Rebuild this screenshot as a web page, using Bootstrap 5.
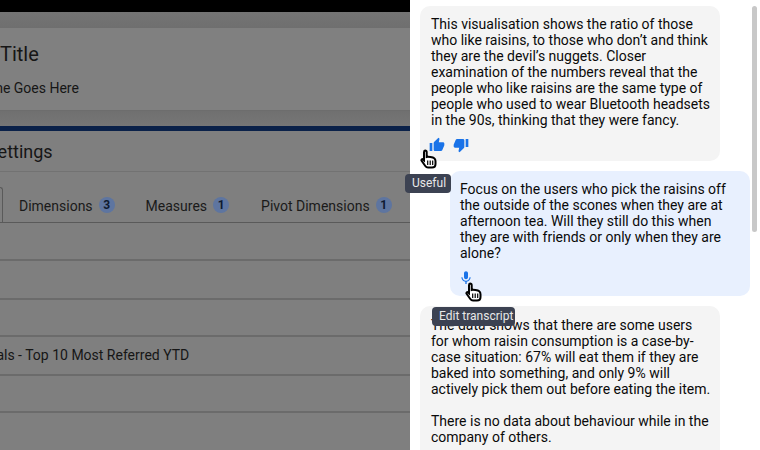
<!doctype html>
<html lang="en"><head><meta charset="utf-8"><title>Chat</title>
<link rel="stylesheet" href="https://cdn.jsdelivr.net/npm/bootstrap@5.3.0/dist/css/bootstrap.min.css">
<style>
html,body{margin:0;height:450px;overflow:hidden;background:#fff}
body{font-family:Roboto,"Liberation Sans",sans-serif;color:#111}
.stage{width:760px;height:450px;position:relative;overflow:hidden}
.leftpane{width:410px;height:450px;overflow:hidden;background:#7f7f7f;color:#161616}
.topbar{height:12px;background:#000}
.band1{height:16px;background:linear-gradient(#747474,#6f6f6f)}
.titlecard{height:83px;background:#808080;border-bottom:1px solid #6d6d6d;padding:12px 0 0 0;white-space:nowrap}
.ttl{font-size:20px;line-height:28px;margin:0;font-weight:400;white-space:nowrap}
.subt{font-size:14px;line-height:20px;margin:10px 0 0;white-space:nowrap}
.hide1{margin-left:-64px}
.hide2{margin-left:-72px}
.hide3{margin-left:-71px}
.band2{height:15px;background:linear-gradient(#707070,#767676)}
.navyline{height:5px;background:#0a2149}
.sethead{height:41px;border-bottom:1px solid #727272;padding:7px 0 0 0}
.sethead .ttl{font-size:18px;line-height:28px}
.tabrow{height:51px;border-bottom:1px solid #5a5a5a;white-space:nowrap}
.tabon{width:3px;height:35px;margin-top:15px;border:1px solid #5a5a5a;border-left:0;border-bottom:0;border-radius:0 4px 0 0;background:#7f7f7f;flex:none}
.tabitem{font-size:14px;line-height:20px;height:20px;color:#1a1a1a;margin-top:24px;flex:none}
.tabone{margin-left:16px}
.tabtwo{margin-left:31px}
.tabthree{margin-left:32px}
.cnt{width:16px;height:16px;border-radius:50%;background:#5e75a0;font-size:12px;font-weight:700;line-height:16px;text-align:center;color:#0e1a30;margin:1px 0 0 6px;flex:none}
.drow{border-bottom:2px solid #6b6b6b;font-size:14px;line-height:20px;white-space:nowrap}
.h1r{height:38px}.h2r{height:39px}.h3r{height:37px}.h4r{height:39px;padding-top:8px;margin-left:0}.h5r{height:37px}
.hide4{margin-left:-68px;display:block}
.chatpane{width:350px;height:450px;overflow:hidden;padding:6px 0 0 10px;background:#fff}
.bubble{width:300px;border-radius:10px;font-size:14px;line-height:16px;color:#0a0a0a}
.bot{background:#f4f4f4;padding:10px 8px 8px 11px;height:155px}
.usr{background:#e8f0fe;margin:10px 0 10px 30px;padding:10px 20px 8px 10px;height:125px}
.tail{height:200px;padding-top:11px}
.bubtext{margin:0}
.actions{margin-top:9px;gap:8px;margin-left:-2px}
.ico{width:16px;height:16px;fill:#1a73e8;display:block}
.tip{position:absolute;background:#3c4252;color:#e8e8e8;font-size:12px;line-height:16px;padding:1px 6px 2px 7px;border-radius:4px;white-space:nowrap}
.tip1{left:405px;top:174px;height:19px;width:46px}
.tip2{left:432px;top:307px;height:19px;width:83px}
.hand{position:absolute;width:17px;height:20px}
.hand1{left:420px;top:149px}
.hand2{left:465px;top:282px}
.sbar{position:absolute;left:752px;top:6px;width:5px;height:226px;border-radius:3px;background:#c8c8c8}
</style></head><body>
<div class="stage d-flex">
<div class="leftpane">
  <div class="topbar"></div><div class="band1"></div>
  <div class="titlecard"><h1 class="ttl hide1">Report Title</h1><p class="subt hide2">Report Name Goes Here</p></div>
  <div class="band2"></div><div class="navyline"></div>
  <div class="sethead"><h2 class="ttl hide3">Report Settings</h2></div>
  <div class="tabrow d-flex align-items-start">
    <div class="tabon"></div>
    <div class="tabitem tabone d-flex"><span>Dimensions</span><span class="cnt">3</span></div>
    <div class="tabitem tabtwo d-flex"><span>Measures</span><span class="cnt">1</span></div>
    <div class="tabitem tabthree d-flex"><span>Pivot Dimensions</span><span class="cnt">1</span></div>
  </div>
  <div class="drow h1r"></div><div class="drow h2r"></div><div class="drow h3r"></div>
  <div class="drow h4r"><span class="hide4">Top Referrals - Top 10 Most Referred YTD</span></div>
  <div class="drow h5r"></div>
</div>
<div class="chatpane">
 <div class="bubble bot">
  <p class="bubtext">This visualisation shows the ratio of those who like raisins, to those who don’t and think they are the devil’s nuggets. Closer examination of the numbers reveal that the people who like raisins are the same type of people who used to wear Bluetooth headsets in the 90s, thinking that they were fancy.</p>
  <div class="actions d-flex">
   <svg class="ico" viewBox="0 0 24 24"><path d="M1 21h4V9H1v12zm22-11c0-1.100-.9-2-2-2h-6.310l.95-4.570.03-.32c0-.41-.17-.79-.44-1.060L14.170 1 7.590 7.590C7.220 7.950 7 8.450 7 9v10c0 1.100.9 2 2 2h9c.83 0 1.540-.5 1.840-1.220l3.020-7.050c.09-.23.14-.47.14-.73v-2z"/></svg>
   <svg class="ico" viewBox="0 0 24 24"><path d="M15 3H6c-.83 0-1.540.5-1.840 1.220l-3.020 7.050c-.09.23-.14.47-.14.73v2c0 1.100.9 2 2 2h6.310l-.95 4.570-.03.32c0 .41.17.79.44 1.060L9.830 23l6.590-6.590c.36-.36.58-.86.58-1.410V5c0-1.100-.9-2-2-2zm4 0v12h4V3h-4z"/></svg>
  </div>
 </div>
 <div class="bubble usr">
  <p class="bubtext">Focus on the users who pick the raisins off the outside of the scones when they are at afternoon tea. Will they still do this when they are with friends or only when they are alone?</p>
  <div class="actions d-flex">
   <svg class="ico" viewBox="0 0 24 24"><path d="M12 14c1.660 0 3-1.340 3-3V5c0-1.660-1.340-3-3-3S9 3.340 9 5v6c0 1.660 1.340 3 3 3zm5.300-3c0 3-2.540 5.100-5.300 5.100S6.700 14 6.700 11H5c0 3.410 2.720 6.230 6 6.720V21h2v-3.280c3.280-.48 6-3.300 6-6.720h-1.700z"/></svg>
  </div>
 </div>
 <div class="bubble bot tail">
  <p class="bubtext">The data shows that there are some users for whom raisin consumption is a case-by-case situation: 67% will eat them if they are baked into something, and only 9% will actively pick them out before eating the item.<br><br>There is no data about behaviour while in the company of others.</p>
 </div>
</div>
<div class="sbar"></div>
<div class="tip tip1">Useful</div>
<div class="tip tip2">Edit transcript</div>
<svg class="hand hand1" viewBox="0 0 17 20"><path d="M5 1.500c1 0 1.700.7 1.700 1.700V8c1.300-.4 6.300.3 7.500 1.200 1 .8 1.300 1.800 1.300 3v2.800c0 2-1.500 3.500-3.500 3.500H8c-1.200 0-2-.5-2.700-1.500L1.600 11.800c-.6-.9.500-2.200 1.500-1.400l.9.800V3.200c0-1 .4-1.700 1-1.700z" fill="#fff" stroke="#000" stroke-width="2"/><path d="M7.700 11.500v4.500M10.200 11.500v4.500M12.700 11.500v4.500" stroke="#000" stroke-width="1.200"/></svg>
<svg class="hand hand2" viewBox="0 0 17 20"><path d="M5 1.500c1 0 1.700.7 1.700 1.700V8c1.300-.4 6.300.3 7.500 1.200 1 .8 1.300 1.800 1.300 3v2.800c0 2-1.500 3.500-3.500 3.500H8c-1.200 0-2-.5-2.700-1.500L1.600 11.800c-.6-.9.500-2.200 1.500-1.400l.9.800V3.200c0-1 .4-1.700 1-1.700z" fill="#fff" stroke="#000" stroke-width="2"/><path d="M7.700 11.500v4.500M10.200 11.500v4.500M12.700 11.500v4.500" stroke="#000" stroke-width="1.200"/></svg>
</div>
<script src="https://cdn.jsdelivr.net/npm/bootstrap@5.3.0/dist/js/bootstrap.bundle.min.js"></script>
</body></html>
